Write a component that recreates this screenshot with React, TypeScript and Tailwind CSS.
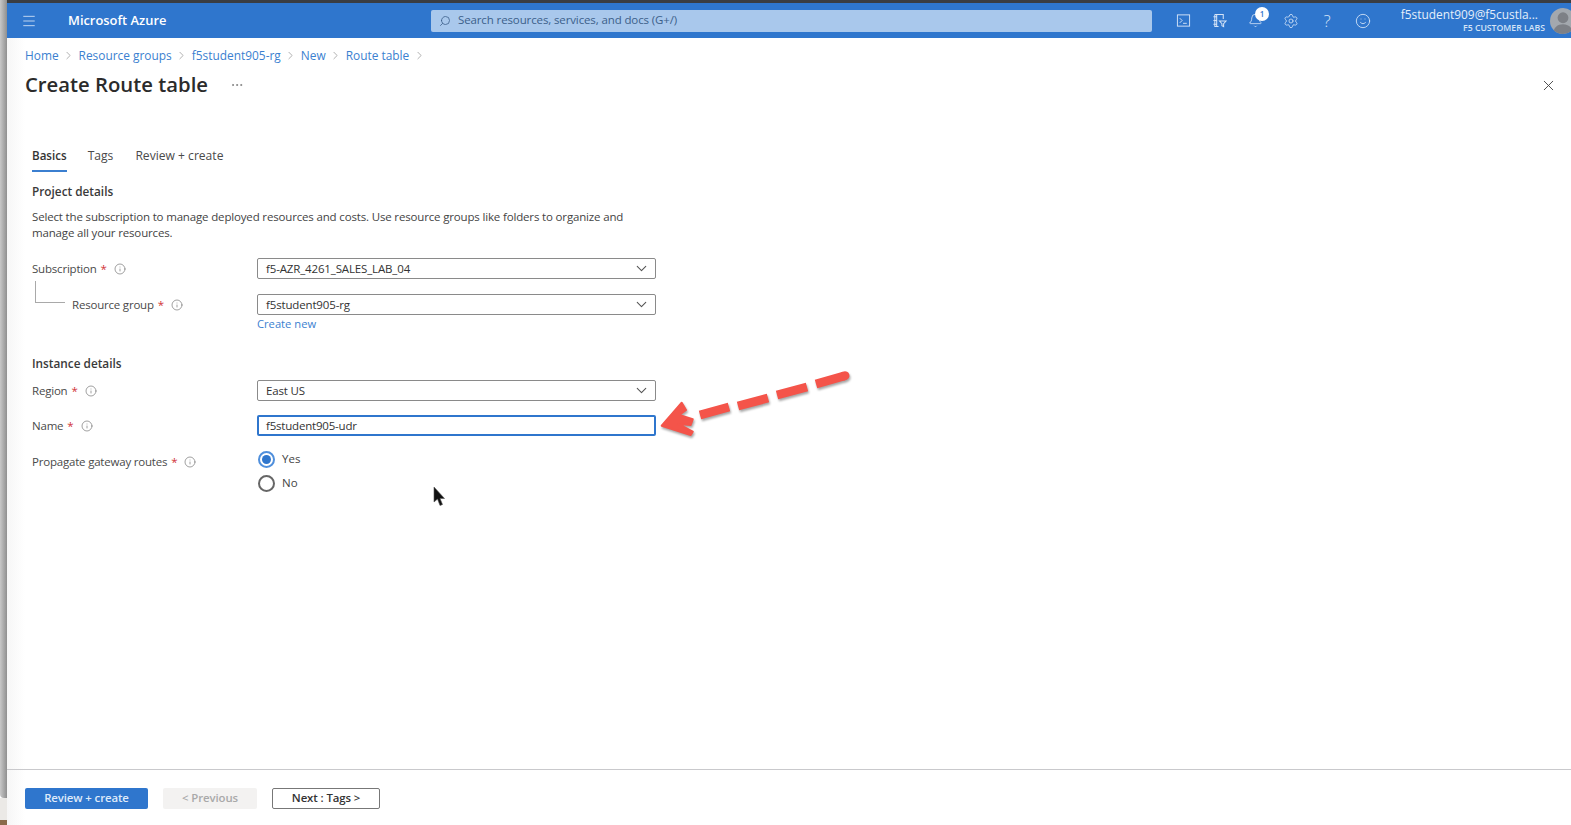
import { ChevronDown, ChevronRight, Ellipsis, Info, Menu, Search, Settings, Smile, X, Bell } from "lucide-react"

const crumbs = ["Home", "Resource groups", "f5student905-rg", "New", "Route table"]

function FieldLabel({ text, indent }: { text: string; indent?: boolean }) {
  return (
    <div className={`flex w-[225px] shrink-0 items-center text-[11.5px] tracking-[-0.2px] text-[#4a4a4a] ${indent ? "pl-[40px]" : ""}`}>
      <span>{text}</span>
      <span className="ml-[4px] text-[#d13438]">*</span>
      <Info className="ml-[7px] size-[12px] text-[#777]" strokeWidth={1.4} />
    </div>
  )
}

function SelectBox({ value }: { value: string }) {
  return (
    <div className="flex h-[21px] w-[399px] items-center justify-between rounded-[2px] border border-[#8a8a8a] pl-[8px] pr-[5px] text-[11.5px] tracking-[-0.15px] text-[#333]">
      <span>{value}</span>
      <ChevronDown className="size-[17px] text-[#555]" strokeWidth={1.5} />
    </div>
  )
}

function TopIcon({ children }: { children: React.ReactNode }) {
  return <div className="relative flex w-[36px] items-center justify-center text-[#d5e4f7]">{children}</div>
}

export default function App() {
  return (
    <div className="relative flex h-screen overflow-hidden bg-white font-['Open_Sans','Noto_Sans',sans-serif]">
      <div className="flex w-[7px] shrink-0 flex-col">
        <div className="flex-1 rounded-bl-[4px] bg-[linear-gradient(90deg,#c8c8c8,#8f8f8f)]" />
        <div className="h-[22px] bg-[#ebe9e6]" />
        <div className="h-[5px] bg-[#8a6a4a]" />
      </div>
      <div className="flex min-w-0 flex-1 flex-col">
        <div className="h-[3px] shrink-0 bg-[#3a3d42]" />

        {/* Top bar */}
        <header className="flex h-[35px] shrink-0 items-center overflow-hidden bg-[#2f76cd] text-white">
          <Menu className="ml-[14px] size-[16px] shrink-0 text-[#c9dcf3]" strokeWidth={1.4} />
          <span className="ml-[31px] w-[363px] shrink-0 text-[12.9px] font-semibold">Microsoft Azure</span>
          <div className="flex h-[22px] w-[721px] shrink-0 items-center rounded-[2px] bg-[#a9c8ec] pl-[8px] text-[11.5px] tracking-[-0.12px] text-[#3c5f8a]">
            <Search className="size-[12px] -scale-x-100" strokeWidth={1.6} />
            <span className="-mt-[2px] ml-[7px]">Search resources, services, and docs (G+/)</span>
          </div>
          <div className="ml-[13px] flex h-full shrink-0">
            <TopIcon>
              <svg viewBox="0 0 16 16" className="size-[15px]" fill="none" stroke="currentColor" strokeWidth="1">
                <rect x="1.5" y="2" width="13" height="12" />
                <path d="M4 5.5l2.5 2.5L4 10.5M7.5 11h4" />
              </svg>
            </TopIcon>
            <TopIcon>
              <svg viewBox="0 0 16 16" className="size-[15px]" fill="none" stroke="currentColor" strokeWidth="1.1">
                <path d="M3 1.5h9v5M3 1.5v13h4M5 1.5v13M1.5 4h3M1.5 8h3M1.5 12h3" />
                <path d="M8 8.5h7l-2.6 3v3l-1.8-1v-2z" />
              </svg>
            </TopIcon>
            <TopIcon>
              <Bell className="size-[15px]" strokeWidth={1.3} />
              <span className="absolute left-[18px] top-[4px] flex size-[14px] items-center justify-center rounded-full bg-white text-[8px] font-semibold text-[#2f76cd]">1</span>
            </TopIcon>
            <TopIcon><Settings className="size-[16px]" strokeWidth={1.2} /></TopIcon>
            <TopIcon><span className="text-[17px] font-light leading-none">?</span></TopIcon>
            <TopIcon><Smile className="size-[16px]" strokeWidth={1.3} /></TopIcon>
          </div>
          <div className="ml-[12px] flex w-[152px] shrink-0 flex-col items-end leading-none">
            <span className="mr-[7px] text-[11.9px] text-[#e4eefa]">f5student909@f5custla...</span>
            <span className="mt-[3px] text-[8.7px] font-semibold text-[#d5e4f7]">F5 CUSTOMER LABS</span>
          </div>
          <div className="ml-[5px] flex size-[26px] shrink-0 items-end justify-center overflow-hidden rounded-full bg-[#a3a8ae]">
            <svg viewBox="0 0 24 24" className="size-[26px] shrink-0" fill="#7d8086">
              <circle cx="12" cy="9" r="5" />
              <path d="M3 24c0-6 4-9 9-9s9 3 9 9z" />
            </svg>
          </div>
        </header>

        <main className="flex min-h-0 flex-1 flex-col bg-[linear-gradient(90deg,#f6f6f6,#ffffff_18px)] pl-[18px]">
          {/* Breadcrumb */}
          <nav className="mt-[8px] flex h-[20px] items-center text-[11.9px] text-[#3b7fd0]">
            {crumbs.map((c) => (
              <span key={c} className="flex items-center">
                {c}
                <ChevronRight className="mx-[3.5px] size-[13px] text-[#888]" strokeWidth={1.2} />
              </span>
            ))}
          </nav>

          {/* Title */}
          <div className="mt-[3px] flex h-[32px] items-center pr-[14px]">
            <h1 className="-mt-[1px] text-[20.3px] font-semibold text-[#2b2b2b]">Create Route table</h1>
            <Ellipsis className="ml-[22px] size-[14px] text-[#777]" strokeWidth={1.4} />
            <X className="ml-auto size-[17px] text-[#444]" strokeWidth={1.3} />
          </div>

          {/* Form */}
          <div className="pl-[7px]">
            <div className="mt-[46px] flex h-[24px] gap-[21px] text-[12.1px] text-[#4a4a4a]">
              <span className="relative text-[11.6px] font-semibold text-[#333]">
                Basics
                <span className="absolute inset-x-0 top-[23px] h-[2px] bg-[#3b7fd0]" />
              </span>
              <span className="mr-[1px]">Tags</span>
              <span>Review + create</span>
            </div>

            <h2 className="mt-[11px] text-[11.8px] font-semibold leading-[18px] text-[#3a3a3a]">Project details</h2>
            <p className="mt-[9px] w-[610px] text-[11.5px] leading-[16px] tracking-[-0.16px] text-[#444]">
              Select the subscription to manage deployed resources and costs. Use resource groups like folders to organize and manage all your resources.
            </p>

            <div className="mt-[17px] flex h-[21px]">
              <FieldLabel text="Subscription" />
              <SelectBox value="f5-AZR_4261_SALES_LAB_04" />
            </div>
            <div className="relative mt-[15px] flex h-[21px]">
              <div className="absolute left-[3px] top-[-13px] h-[22px] w-[30px] border-b border-l border-[#a9a9a9]" />
              <FieldLabel text="Resource group" indent />
              <SelectBox value="f5student905-rg" />
            </div>
            <a className="ml-[225px] mt-[1px] block text-[11.2px] leading-[16px] text-[#3b7fd0]">Create new</a>

            <h2 className="mt-[22px] text-[11.8px] font-semibold leading-[18px] text-[#3a3a3a]">Instance details</h2>

            <div className="mt-[8px] flex h-[21px]">
              <FieldLabel text="Region" />
              <SelectBox value="East US" />
            </div>
            <div className="mt-[14px] flex h-[21px]">
              <FieldLabel text="Name" />
              <div className="flex h-[21px] w-[399px] items-center rounded-[2px] border-2 border-[#2f76cd] pl-[7px] text-[11.5px] tracking-[-0.2px] text-[#333]">f5student905-udr</div>
            </div>

            <div className="mt-[11px] flex">
              <div className="flex h-[24px] items-center pt-[6px]">
                <FieldLabel text="Propagate gateway routes" />
              </div>
              <div className="ml-[1px] flex flex-col">
                <label className="flex h-[24px] items-center gap-[7px] text-[11.5px] text-[#444]">
                  <span className="flex size-[17px] items-center justify-center rounded-full border-2 border-[#4f8fdc]">
                    <span className="size-[9px] rounded-full bg-[#2f76cd]" />
                  </span>
                  Yes
                </label>
                <label className="flex h-[24px] items-center gap-[7px] text-[11.5px] text-[#444]">
                  <span className="size-[17px] rounded-full border-2 border-[#666]" />
                  No
                </label>
              </div>
            </div>
          </div>
        </main>

        {/* Footer */}
        <footer className="flex h-[56px] shrink-0 items-start gap-[15px] border-t border-[#c9c9cc] bg-[linear-gradient(90deg,#f6f6f6,#ffffff_18px)] pl-[18px] pt-[18px] text-[11.4px] font-semibold tracking-[-0.1px]">
          <button className="h-[21px] w-[123px] rounded-[2px] bg-[#2f76cd] pb-px text-[#dfeafa]">Review + create</button>
          <button className="h-[21px] w-[94px] rounded-[2px] bg-[#f3f2f1] pb-px text-[#a9a9a9]">&lt; Previous</button>
          <button className="h-[21px] w-[108px] rounded-[2px] border border-[#777] pb-px text-[#333]">Next : Tags &gt;</button>
        </footer>
      </div>

      {/* Annotation arrow drawn over the page */}
      <svg className="pointer-events-none absolute left-[650px] top-[360px] h-[90px] w-[210px] drop-shadow-[1px_2px_1px_rgba(0,0,0,0.35)]" viewBox="0 0 210 90" fill="none">
        <polygon
          points="11.7,65.7 31.7,42.7 36,50 29.3,55 42.7,59.3 40.7,65 28.3,64 42.7,71.7 40.7,75"
          fill="#f4544a"
          stroke="#f4544a"
          strokeWidth="2"
          strokeLinejoin="round"
        />
        <g stroke="#f4544a" strokeWidth="9">
          <path d="M50 55 L79 47 M88 46 L118 38 M127 35 L157 27 M166 24 L194 16" />
          <path d="M194 16 L195 15.7" strokeLinecap="round" />
        </g>
      </svg>

      {/* Mouse pointer */}
      <svg className="pointer-events-none absolute left-[432px] top-[486px] h-[22px] w-[14px]" viewBox="0 0 14 22">
        <path d="M2 1 L2 16 L5.5 13 L8 19.5 L10.5 18.5 L8 12.5 L12.5 12.5 Z" fill="#111" stroke="#555" strokeWidth="0.6" />
      </svg>
    </div>
  )
}
